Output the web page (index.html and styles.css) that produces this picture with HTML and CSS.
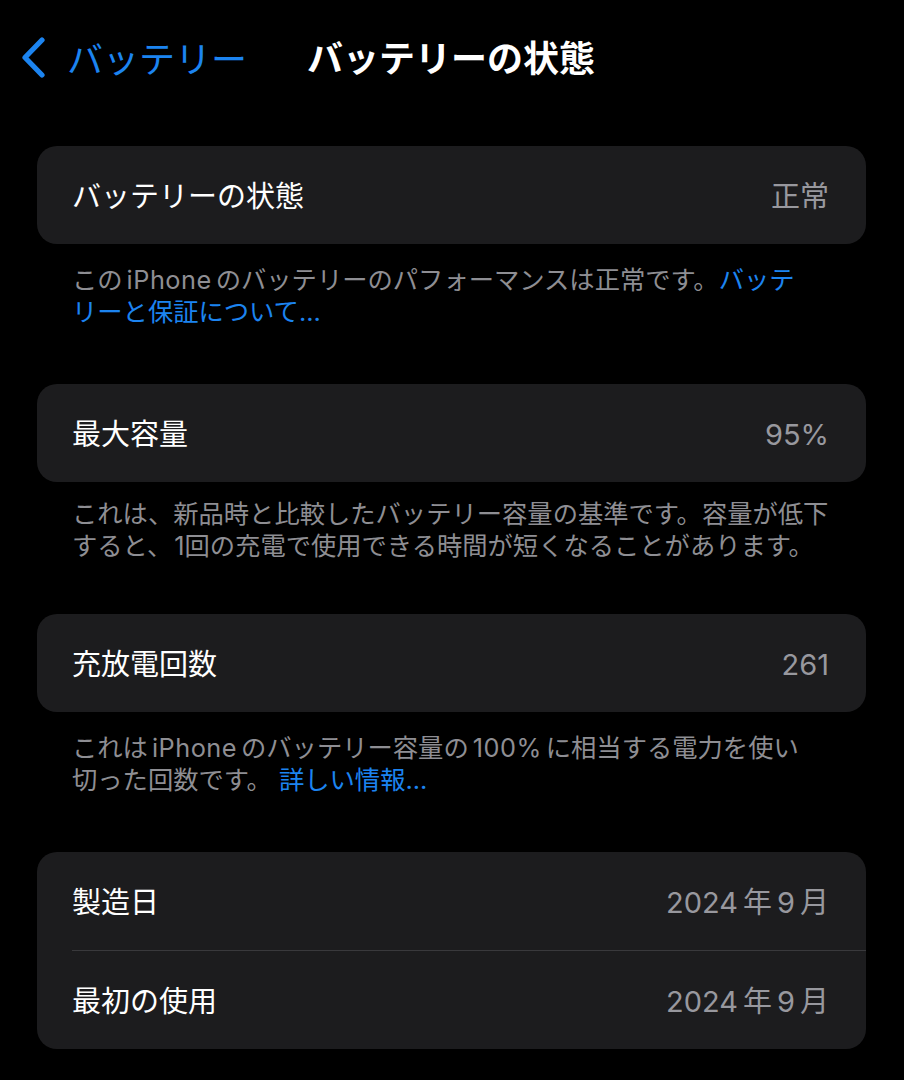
FILE: index.html
```html
<!DOCTYPE html>
<html lang="ja">
<head>
<meta charset="utf-8">
<title>バッテリーの状態</title>
<link rel="stylesheet" href="styles.css">
</head>
<body>
<header class="nav">
  <a class="back">
    <svg class="chev" viewBox="0 0 25 41" aria-hidden="true"><path d="M21 3 L4 20.5 L21 38"/></svg>
    <span>バッテリー</span>
  </a>
  <h1 class="title">バッテリーの状態</h1>
  <span class="spacer"></span>
</header>
<main class="list">
  <section class="group">
    <div class="card">
      <div class="row"><span class="label">バッテリーの状態</span><span class="value">正常</span></div>
    </div>
    <p class="footer">この<span class="lat">iPhone</span>のバッテリーのパフォーマンスは正常です。<a class="link">バッテリーと保証について...</a></p>
  </section>
  <section class="group">
    <div class="card">
      <div class="row"><span class="label">最大容量</span><span class="value">95%</span></div>
    </div>
    <p class="footer tight">これは、新品時と比較したバッテリー容量の基準です。容量が低下すると、<span class="num">1</span>回の充電で使用できる時間が短くなることがあります。</p>
  </section>
  <section class="group">
    <div class="card">
      <div class="row"><span class="label">充放電回数</span><span class="value">261</span></div>
    </div>
    <p class="footer">これは<span class="lat">iPhone</span>のバッテリー容量の<span class="lat">100%</span>に相当する電力を使い切った回数です。 <a class="link">詳しい情報...</a></p>
  </section>
  <section class="group">
    <div class="card">
      <div class="row"><span class="label">製造日</span><span class="value"><span class="dlat">2024</span>年<span class="dlat">9</span>月</span></div>
      <div class="sep"></div>
      <div class="row"><span class="label">最初の使用</span><span class="value"><span class="dlat">2024</span>年<span class="dlat">9</span>月</span></div>
    </div>
  </section>
</main>
</body>
</html>
```
FILE: styles.css
```css
* { box-sizing: border-box; }

html, body {
  margin: 0;
  background: #000;
}

body {
  width: 904px;
  min-height: 1080px;
  color: #fff;
  font-family: "Inter", "Noto Sans CJK JP", "Noto Sans", sans-serif;
  -webkit-font-smoothing: antialiased;
}

.nav {
  display: grid;
  grid-template-columns: 1fr auto 1fr;
  align-items: center;
  height: 114px;
  padding: 0 21px;
}

.back {
  display: flex;
  align-items: center;
  gap: 21px;
  color: #1c84f0;
  font-size: 36px;
  line-height: 40px;
  font-family: "Noto Sans CJK JP", sans-serif;
}

.chev {
  width: 25px;
  height: 41px;
  flex: none;
}

.chev path {
  fill: none;
  stroke: #1c84f0;
  stroke-width: 5.2;
  stroke-linecap: round;
  stroke-linejoin: round;
}

.title {
  margin: 0 0 2px;
  font-size: 36px;
  line-height: 40px;
  font-weight: 700;
  font-family: "Noto Sans CJK JP", sans-serif;
  white-space: nowrap;
  transform: translateX(-1px);
}

.list {
  padding: 32px 38px 0 37px;
}

.card {
  background: #1c1c1e;
  border-radius: 20px;
  overflow: hidden;
}

.row {
  display: flex;
  align-items: center;
  justify-content: space-between;
  height: 98px;
  padding: 3px 37px 0 35px;
  font-size: 29px;
  line-height: 36px;
}

.label {
  color: #fff;
}

.value {
  color: #98989e;
}

.dlat {
  margin: 0 5px;
}

.dlat:first-child {
  margin-left: 0;
}

.sep {
  height: 1px;
  margin-left: 35px;
  background: #39393c;
}

.footer {
  margin: 20px 0 56px;
  padding: 0 30px 0 35px;
  font-size: 25.3px;
  line-height: 32px;
  color: #8e8e93;
  line-break: strict;
}

.footer.tight {
  margin: 16px 0 52px;
}

.lat {
  margin: 0 4px;
  letter-spacing: 0.5px;
}

.num {
  margin-left: 2px;
}

.link {
  color: #1c84f0;
}
```
